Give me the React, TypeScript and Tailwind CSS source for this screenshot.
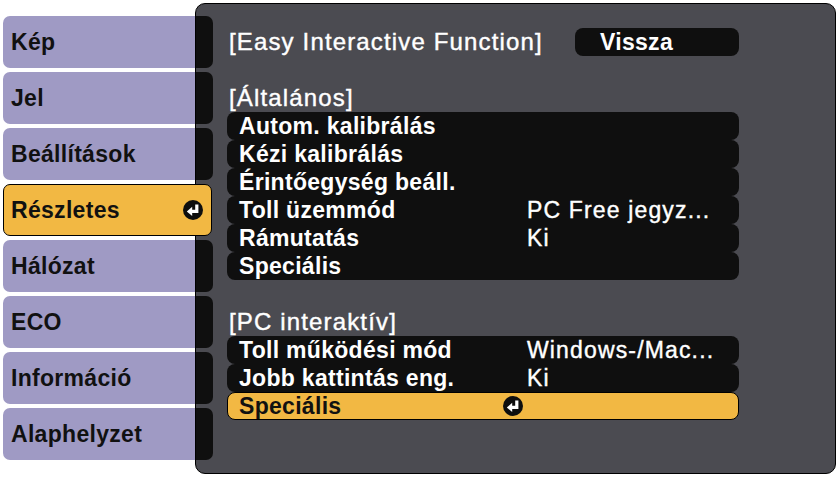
import React from "react";

const tabs = [
  "Kép",
  "Jel",
  "Beállítások",
  "Részletes",
  "Hálózat",
  "ECO",
  "Információ",
  "Alaphelyzet",
];

function EnterIcon() {
  return (
    <svg width="20" height="20" viewBox="0 0 20 20" className="h-[20px] w-[20px] shrink-0">
      <circle cx="10" cy="10" r="10" fill="#0e0e0e" />
      <path d="M13.8 4.4 V11.4 H8" stroke="#fff" strokeWidth="3.2" fill="none" strokeLinejoin="miter" />
      <path d="M3.8 11.4 L9.2 6.8 L9.2 16 Z" fill="#fff" />
    </svg>
  );
}

type Row = { label: string; value?: string; selected?: boolean };

const general: Row[] = [
  { label: "Autom. kalibrálás" },
  { label: "Kézi kalibrálás" },
  { label: "Érintőegység beáll." },
  { label: "Toll üzemmód", value: "PC Free jegyz..." },
  { label: "Rámutatás", value: "Ki" },
  { label: "Speciális" },
];

const pc: Row[] = [
  { label: "Toll működési mód", value: "Windows-/Mac..." },
  { label: "Jobb kattintás eng.", value: "Ki" },
  { label: "Speciális", selected: true },
];

function MenuRow({ row }: { row: Row }) {
  if (row.selected) {
    return (
      <div className="flex h-[28px] w-[512px] items-center rounded-[8px] border border-black bg-[#f2b843] pl-[11px] text-[#111]">
        <span className="w-[264px]">{row.label}</span>
        <EnterIcon />
      </div>
    );
  }
  return (
    <div className="flex h-[28px] w-[512px] items-center rounded-[8px] bg-[#0f0f0f] pl-[12px] text-white">
      <span className="w-[288px] whitespace-nowrap">{row.label}</span>
      {row.value && (
        <span className="whitespace-nowrap text-[23px] font-normal tracking-[1.15px] [-webkit-text-stroke:0.4px_white]">
          {row.value}
        </span>
      )}
    </div>
  );
}

export default function App() {
  return (
    <div
      className="flex h-[478px] w-[839px] items-start bg-white pt-[3px] text-[23px] font-bold leading-[28px] tracking-[0.3px]"
      style={{ fontFamily: '"Liberation Sans", Arial, sans-serif' }}
    >
      {/* Left tabs */}
      <div className="ml-[3px] flex w-[192px] shrink-0 flex-col gap-[4px] pt-[13px]">
        {tabs.map((t) =>
          t === "Részletes" ? (
            <div
              key={t}
              className="relative z-10 flex h-[52px] w-[209px] items-center justify-between rounded-[7px] border border-black bg-[#f2b843] pl-[7px] pr-[8px] text-[#111]"
            >
              <span>{t}</span>
              <EnterIcon />
            </div>
          ) : (
            <div
              key={t}
              className="flex h-[52px] w-[192px] items-center rounded-l-[7px] bg-[#9f9ac4] pl-[8px] text-[#111]"
            >
              {t}
            </div>
          )
        )}
      </div>

      {/* Main panel */}
      <div className="flex h-[471px] w-[641px] shrink-0 rounded-[10px] border border-black bg-[#4b4b51]">
        <div className="flex w-[17px] shrink-0 flex-col gap-[4px] pt-[12px]">
          {tabs.map((t) => (
            <div
              key={t}
              className={
                t === "Részletes"
                  ? "h-[52px] w-[17px]"
                  : "h-[52px] w-[17px] rounded-r-[7px] bg-[#0f0f0f]"
              }
            />
          ))}
        </div>
        <div className="ml-[14px] flex flex-col pt-[24px]">
          <div className="flex h-[28px] items-center text-white">
            <span className="w-[348px] whitespace-nowrap pl-[2px] text-[24px] font-normal tracking-[1.15px] [-webkit-text-stroke:0.4px_white]">
              [Easy Interactive Function]
            </span>
            <div className="flex h-[28px] w-[164px] items-center rounded-[8px] bg-[#0f0f0f] pl-[25px]">
              Vissza
            </div>
          </div>
          <div className="h-[28px]" />
          <div className="h-[28px] pl-[2px] text-[24px] font-normal tracking-[1.15px] text-white [-webkit-text-stroke:0.4px_white]">
            [Általános]
          </div>
          {general.map((r, i) => (
            <MenuRow key={i} row={r} />
          ))}
          <div className="h-[28px]" />
          <div className="h-[28px] pl-[2px] text-[24px] font-normal tracking-[1.15px] text-white [-webkit-text-stroke:0.4px_white]">
            [PC interaktív]
          </div>
          {pc.map((r, i) => (
            <MenuRow key={i} row={r} />
          ))}
        </div>
      </div>
    </div>
  );
}
